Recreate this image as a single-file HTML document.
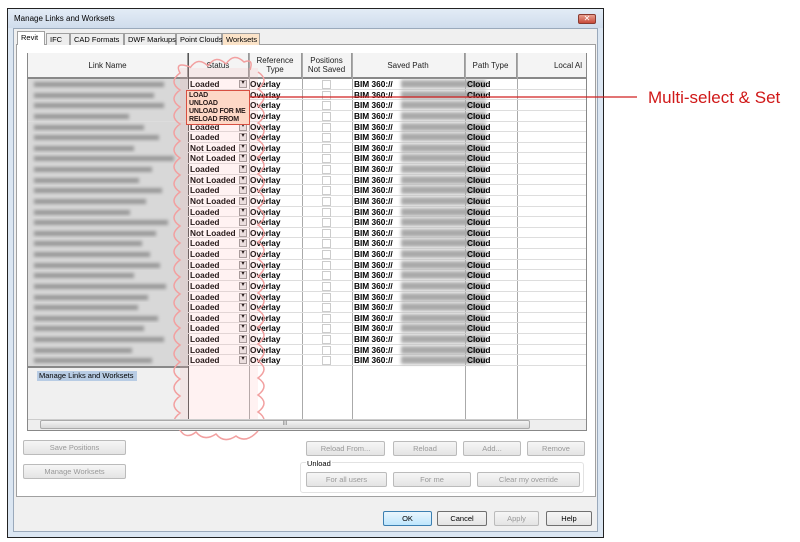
<!DOCTYPE html>
<html><head><meta charset="utf-8"><style>
*{box-sizing:border-box;margin:0;padding:0}
body{width:800px;height:542px;background:#fff;position:relative;overflow:hidden;font-family:"Liberation Sans",sans-serif;font-size:8px;color:#000}
.abs{position:absolute}
.win{left:7px;top:8px;width:597px;height:530px;border:1px solid #222;background:#dbe6f2}
.title{left:8px;top:9px;width:595px;height:19px;background:linear-gradient(#e3ecf6,#cfdcec);font-size:8px;padding:5px 0 0 6px}
.xbtn{left:578px;top:14px;width:18px;height:10px;background:linear-gradient(#e8a090,#c84a3a);border:1px solid #8a3a30;border-radius:2px;color:#fff;font-size:8px;line-height:8px;text-align:center}
.client{left:13px;top:28px;width:585px;height:504px;background:#f0f0f0;border:1px solid #9aa9bb}
.page{left:16px;top:44px;width:580px;height:453px;background:#fff;border:1px solid #a0a0a0}
.tab{top:33px;height:12px;border:1px solid #a0a0a0;border-bottom:none;background:#eee;font-size:7.5px;padding:1px 3px;white-space:nowrap}
.grid{left:27px;top:53px;width:560px;height:378px;border:1px solid #888;background:#fff}
.hdr{top:53px;height:26px;background:#f4f4f4;border-right:1px solid #999;border-bottom:2px solid #888;font-size:8px;color:#222;text-align:center;display:flex;align-items:center;justify-content:center;line-height:9px}
.row{position:absolute;left:28px;width:558px;height:10.63px;border-bottom:1px solid #ddd}
.row span{position:absolute;top:0;font-weight:bold;font-size:8.3px;line-height:10px;white-space:nowrap}
.nm{position:absolute;left:0;top:0;width:160px;height:10.6px;background:#d8d8d8}
.bl{position:absolute;top:3px;height:5px;background:#999;filter:blur(1.5px)}
.dd{position:absolute;left:211px;top:1px;width:8px;height:8px;background:#e8e8e8;border:1px solid #999;font-size:6px;line-height:5px;text-align:center}
.cb{position:absolute;left:294px;top:1px;width:9px;height:9px;border:1px solid #ccc}
.vl{position:absolute;top:53px;width:1px;height:366px;background:#aaa}
.btn{position:absolute;height:15px;border:1px solid #bbb;border-radius:2px;background:linear-gradient(#f6f6f6,#e4e4e4);color:#999;font-size:7.5px;text-align:center;line-height:13px}
.btn.en{color:#000;border-color:#707070}
</style></head><body>
<div class="abs win"></div>
<div class="abs title">Manage Links and Worksets</div>
<div class="abs xbtn">✕</div>
<div class="abs client"></div>
<div class="abs page"></div>
<div class="abs tab" style="left:17px;top:31px;height:14px;background:#fff;width:28px">Revit</div>
<div class="abs tab" style="left:46px;width:24px">IFC</div>
<div class="abs tab" style="left:70px;width:54px">CAD Formats</div>
<div class="abs tab" style="left:124px;width:52px">DWF Markups</div>
<div class="abs tab" style="left:176px;width:46px">Point Clouds</div>
<div class="abs tab" style="left:222px;width:38px;background:#fbe3c8">Worksets</div>

<div class="abs grid"></div>
<div class="abs" style="left:28px;top:366px;width:160px;height:53px;background:#f0f0f0;border-top:2px solid #888"></div>
<div class="abs" style="left:37px;top:371px;width:100px;height:10px;background:#b8cce4;font-size:7.5px;padding-left:2px;line-height:10px">Manage Links and Worksets</div>
<div class="abs hdr" style="left:28px;width:160px">Link Name</div>
<div class="abs hdr" style="left:188px;width:61px">Status</div>
<div class="abs hdr" style="left:249px;width:53px">Reference<br>Type</div>
<div class="abs hdr" style="left:302px;width:50px">Positions<br>Not Saved</div>
<div class="abs hdr" style="left:352px;width:113px">Saved Path</div>
<div class="abs hdr" style="left:465px;width:52px">Path Type</div>
<div class="abs hdr" style="left:517px;width:69px;justify-content:flex-end;padding-right:4px;border-right:none">Local Al</div>
<div class="vl" style="left:188px;height:366px;background:#555"></div>
<div class="vl" style="left:249px"></div><div class="vl" style="left:302px"></div><div class="vl" style="left:352px"></div><div class="vl" style="left:465px"></div><div class="vl" style="left:517px"></div>

<div style="position:absolute;left:0;top:79px">
<div class="row" style="top:0px"><div class="nm"><div class="bl" style="left:6px;width:130px"></div></div><span style="left:162px">Loaded</span><div class="dd">▾</div><span style="left:222px">Overlay</span><div class="cb"></div><span style="left:326px">BIM 360://</span><div class="bl" style="left:373px;width:85px;top:1px;height:8px;background:#aaa"></div><span style="left:439px">Cloud</span></div>
</div>
<script>
(function(){
var st=["Loaded","Loaded","Loaded","Loaded","Loaded","Loaded","Not Loaded","Not Loaded","Loaded","Not Loaded","Loaded","Not Loaded","Loaded","Loaded","Not Loaded","Loaded","Loaded","Loaded","Loaded","Loaded","Loaded","Loaded","Loaded","Loaded","Loaded","Loaded","Loaded"];
var h="";
for(var i=1;i<27;i++){
var w=[120,130,95,110,125,100,140,118,105,128,112,96,134,122,108,116,126,100,132,114,104,124,110,130,98,118][i-1];
h+='<div class="row" style="top:'+(i*10.63)+'px"><div class="nm"><div class="bl" style="left:6px;width:'+w+'px"></div></div><span style="left:162px">'+st[i]+'</span><div class="dd">▾</div><span style="left:222px">Overlay</span><div class="cb"></div><span style="left:326px">BIM 360://</span><div class="bl" style="left:373px;width:85px;top:1px;height:8px;background:#aaa"></div><span style="left:439px">Cloud</span></div>';
}
document.currentScript.previousElementSibling.insertAdjacentHTML("beforeend",h);
})();
</script>

<div class="abs" style="left:186px;top:90px;width:64px;height:35px;background:#fde0cc;border:1px solid #d04030;font-weight:bold;font-size:7px;line-height:8px;padding:1px 2px;white-space:nowrap;overflow:hidden;letter-spacing:-0.2px">LOAD<br>UNLOAD<br>UNLOAD FOR ME<br>RELOAD FROM</div>

<svg class="abs" style="left:0;top:0" width="800" height="542">
<rect x="180" y="68" width="78" height="358" fill="rgba(255,170,170,0.15)"/>
<g fill="none" stroke="#f2a0a0" stroke-width="1.5">
<path d="M180 430 q-12 -8 0 -17 q-12 -8 0 -17 q-12 -8 0 -17 q-12 -8 0 -17 q-12 -8 0 -17 q-12 -8 0 -17 q-12 -8 0 -17 q-12 -8 0 -17 q-12 -8 0 -17 q-12 -8 0 -17 q-12 -8 0 -17 q-12 -8 0 -17 q-12 -8 0 -17 q-12 -8 0 -17 q-12 -8 0 -17 q-12 -8 0 -17 q-12 -8 0 -17 q-12 -8 0 -17 q-12 -8 0 -17 q-12 -8 0 -17 q-12 -8 0 -17 q-6 -12 10 -6"/>
<path d="M190 68 q8 -12 18 -2 q8 -12 18 -2 q8 -12 18 -2 q10 -4 6 8"/>
<path d="M258 72 q12 8 0 17 q12 8 0 17 q12 8 0 17 q12 8 0 17 q12 8 0 17 q12 8 0 17 q12 8 0 17 q12 8 0 17 q12 8 0 17 q12 8 0 17 q12 8 0 17 q12 8 0 17 q12 8 0 17 q12 8 0 17 q12 8 0 17 q12 8 0 17 q12 8 0 17 q12 8 0 17 q12 8 0 17 q12 8 0 17 q12 8 0 17"/>
<path d="M180 430 q6 10 16 2 q8 10 20 2 q8 10 20 2 q10 8 22 -5"/>
</g>
<line x1="250" y1="97" x2="637" y2="97" stroke="#d02020" stroke-width="1.2"/>
<text x="648" y="103" font-family="Liberation Sans" font-size="17" fill="#d01818">Multi-select &amp; Set</text>
</svg>

<div class="abs" style="left:28px;top:419px;width:558px;height:11px;background:#eee;border-top:1px solid #ccc"></div>
<div class="abs" style="left:40px;top:420px;width:490px;height:9px;background:linear-gradient(#f4f4f4,#d8d8d8);border:1px solid #aaa;border-radius:2px;font-size:6px;text-align:center;line-height:7px;color:#777">III</div>

<div class="btn" style="left:23px;top:440px;width:103px">Save Positions</div>
<div class="btn" style="left:23px;top:464px;width:103px">Manage Worksets</div>
<div class="btn" style="left:306px;top:441px;width:79px">Reload From...</div>
<div class="btn" style="left:393px;top:441px;width:64px">Reload</div>
<div class="btn" style="left:463px;top:441px;width:58px">Add...</div>
<div class="btn" style="left:527px;top:441px;width:58px">Remove</div>
<div class="abs" style="left:300px;top:462px;width:284px;height:31px;border:1px solid #e2e2e2;border-radius:3px"></div>
<div class="abs" style="left:306px;top:459px;font-size:7.5px;background:#fff;padding:0 1px">Unload</div>
<div class="btn" style="left:306px;top:472px;width:81px">For all users</div>
<div class="btn" style="left:393px;top:472px;width:78px">For me</div>
<div class="btn" style="left:477px;top:472px;width:103px">Clear my override</div>
<div class="btn en" style="left:383px;top:511px;width:49px;border-color:#3c7fb1;background:linear-gradient(#eaf6fd,#bee6fd)">OK</div>
<div class="btn en" style="left:437px;top:511px;width:50px">Cancel</div>
<div class="btn" style="left:494px;top:511px;width:45px">Apply</div>
<div class="btn en" style="left:546px;top:511px;width:46px">Help</div>
</body></html>
